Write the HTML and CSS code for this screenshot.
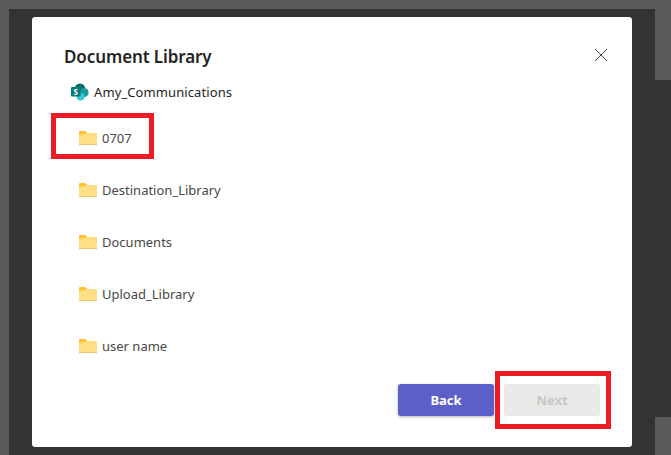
FILE: index.html
```html
<!DOCTYPE html>
<html lang="en">

<head>
    <meta charset="UTF-8">
    <title>Document Library</title>
    <link rel="stylesheet" href="styles.css">
</head>

<body>
    <div class="backdrop">
        <div class="side-top"></div>
        <div class="side-bottom"></div>

        <div class="dialog">
            <div class="dialog-header">
                <h1>Document Library</h1>
                <svg class="close-icon" width="14" height="14" viewBox="0 0 14 14">
                    <path d="M1 1L13 13M13 1L1 13" stroke="#484644" stroke-width="1" fill="none" />
                </svg>
            </div>

            <div class="site">
                <svg class="site-icon" width="18" height="18" viewBox="0 0 18 18">
                    <circle cx="9" cy="5.8" r="5.3" fill="#036c70" />
                    <circle cx="13" cy="9.6" r="4.6" fill="#1a9ba1" />
                    <circle cx="9.6" cy="13.6" r="3.9" fill="#37c6d0" />
                    <rect x="0" y="4" width="9.6" height="9.6" rx="1" fill="#03787c" />
                    <text x="4.8" y="12" class="site-letter">S</text>
                </svg>
                <span>Amy_Communications</span>
            </div>

            <ul class="folders">
                <li class="folder">
                    <svg class="folder-icon" width="18" height="14" viewBox="0 0 18 14">
                        <path d="M0 1a1 1 0 0 1 1-1h5l2.500 2H8L5.500 4H0z" fill="#ffc12e" />
                        <path d="M0 3.500H5.500L8 2H18V14H0z" fill="#ffdf85" />
                        <rect x="0" y="13" width="18" height="1" fill="#f5c56e" />
                    </svg>
                    <span>0707</span>
                </li>
                <li class="folder">
                    <svg class="folder-icon" width="18" height="14" viewBox="0 0 18 14">
                        <path d="M0 1a1 1 0 0 1 1-1h5l2.500 2H8L5.500 4H0z" fill="#ffc12e" />
                        <path d="M0 3.500H5.500L8 2H18V14H0z" fill="#ffdf85" />
                        <rect x="0" y="13" width="18" height="1" fill="#f5c56e" />
                    </svg>
                    <span>Destination_Library</span>
                </li>
                <li class="folder">
                    <svg class="folder-icon" width="18" height="14" viewBox="0 0 18 14">
                        <path d="M0 1a1 1 0 0 1 1-1h5l2.500 2H8L5.500 4H0z" fill="#ffc12e" />
                        <path d="M0 3.500H5.500L8 2H18V14H0z" fill="#ffdf85" />
                        <rect x="0" y="13" width="18" height="1" fill="#f5c56e" />
                    </svg>
                    <span>Documents</span>
                </li>
                <li class="folder">
                    <svg class="folder-icon" width="18" height="14" viewBox="0 0 18 14">
                        <path d="M0 1a1 1 0 0 1 1-1h5l2.500 2H8L5.500 4H0z" fill="#ffc12e" />
                        <path d="M0 3.500H5.500L8 2H18V14H0z" fill="#ffdf85" />
                        <rect x="0" y="13" width="18" height="1" fill="#f5c56e" />
                    </svg>
                    <span>Upload_Library</span>
                </li>
                <li class="folder">
                    <svg class="folder-icon" width="18" height="14" viewBox="0 0 18 14">
                        <path d="M0 1a1 1 0 0 1 1-1h5l2.500 2H8L5.500 4H0z" fill="#ffc12e" />
                        <path d="M0 3.500H5.500L8 2H18V14H0z" fill="#ffdf85" />
                        <rect x="0" y="13" width="18" height="1" fill="#f5c56e" />
                    </svg>
                    <span>user name</span>
                </li>
            </ul>

            <div class="dialog-footer">
                <button class="btn btn-primary">Back</button>
                <button class="btn btn-disabled" disabled>Next</button>
            </div>
        </div>
    </div>

    <div class="mark mark-folder"></div>
    <div class="mark mark-next"></div>
</body>

</html>
```

FILE: styles.css
```css
html, body {
    height: 100%;
}
body {
    margin: 0;
    padding: 9px 0 0 9px;
    box-sizing: border-box;
    overflow: hidden;
    background-color: #5b5b5b;
    font-family: "Noto Sans", "Open Sans", Arial, sans-serif;
    color: #484644;
}
.backdrop {
    height: 100%;
    padding: 8px 0 0 23px;
    box-sizing: border-box;
    background-color: #333333;
}
.side-top, .side-bottom {
    position: absolute;
    left: 655px;
    right: 0;
    background-color: #5b5b5b;
}
.side-top {
    top: 9px;
    height: 71px;
}
.side-bottom {
    top: 417px;
    bottom: 0;
}
.dialog {
    position: relative;
    width: 600px;
    height: 430px;
    padding: 0 32px;
    box-sizing: border-box;
    background-color: white;
    border-radius: 3px;
}
.dialog-header {
    display: flex;
    justify-content: space-between;
    align-items: center;
    height: 78px;
    margin-right: -8px;
}
.dialog-header h1 {
    margin: 0;
    font-size: 17px;
    font-weight: 600;
    letter-spacing: -0.1px;
    color: #252423;
}
.close-icon {
    flex: none;
    margin-top: -2px;
}
.site {
    display: flex;
    align-items: center;
    gap: 5px;
    height: 20px;
    margin: -13px 0 0 7px;
    font-size: 13px;
    letter-spacing: 0.1px;
    color: #252423;
}
.site-letter {
    font-family: "Noto Sans", Arial, sans-serif;
    font-size: 8px;
    font-weight: 700;
    fill: white;
    text-anchor: middle;
}
.folders {
    list-style: none;
    margin: 10px 0 0;
    padding: 0;
}
.folder {
    display: flex;
    align-items: center;
    gap: 5px;
    height: 52px;
    padding-left: 15px;
    font-size: 13px;
}
.folder-icon {
    flex: none;
}
.dialog-footer {
    display: flex;
    justify-content: flex-end;
    gap: 10px;
    margin-top: 12px;
}
.btn {
    width: 96px;
    height: 32px;
    padding: 0;
    border: none;
    border-radius: 3px;
    font-family: inherit;
    font-size: 13px;
    font-weight: 700;
}
.btn-primary {
    background-color: #5b5fc7;
    color: white;
    box-shadow: 0 1px 3px rgba(0,0,0,0.3);
}
.btn-disabled {
    background-color: #ebe9e8;
    color: #c8c6c4;
}
.mark {
    position: absolute;
    box-sizing: border-box;
    border: 5px solid #ed1c24;
}
.mark-folder {
    left: 51px;
    top: 113px;
    width: 103px;
    height: 46px;
}
.mark-next {
    left: 495px;
    top: 371px;
    width: 116px;
    height: 58px;
}
```
